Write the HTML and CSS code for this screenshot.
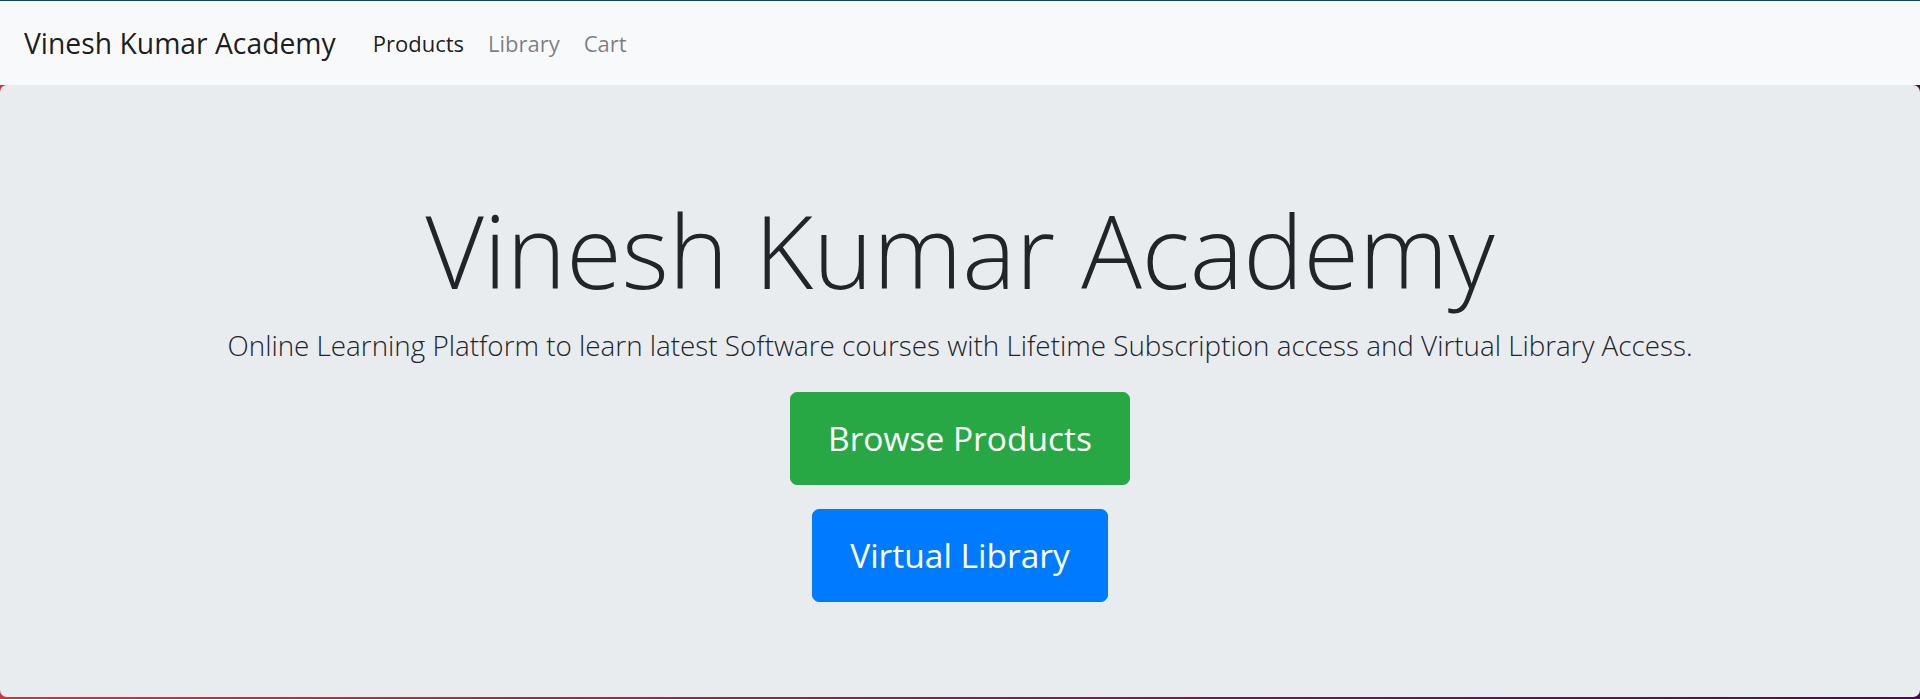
FILE: index.html
```html
<!DOCTYPE html>
<html lang="en">
<head>
<meta charset="utf-8">
<title>Vinesh Kumar Academy</title>
<link rel="stylesheet" href="styles.css">
</head>
<body>
<nav class="navbar">
  <a class="brand" href="#">Vinesh Kumar Academy</a>
  <ul class="nav-links">
    <li><a class="nav-link active" href="#">Products</a></li>
    <li><a class="nav-link" href="#">Library</a></li>
    <li><a class="nav-link" href="#">Cart</a></li>
  </ul>
</nav>
<main class="jumbotron">
  <h1 class="display">Vinesh Kumar Academy</h1>
  <p class="lead">Online Learning Platform to learn latest Software courses with Lifetime Subscription access and Virtual Library Access.</p>
  <div class="actions">
    <a class="btn btn-success" href="#">Browse Products</a>
    <a class="btn btn-primary" href="#">Virtual Library</a>
  </div>
</main>
</body>
</html>
```

FILE: styles.css
```css
html, body {
  margin: 0;
  padding: 0;
  height: 100%;
}
body {
  font-family: "Open Sans", "Noto Sans", sans-serif;
  color: #212529;
  background: linear-gradient(to right, #c23b3f 0%, #8a1d4a 50%, #4a0b4c 100%);
  display: flex;
  flex-direction: column;
  overflow: hidden;
}
.navbar {
  box-sizing: border-box;
  height: 85px;
  flex: none;
  border-top: 1px solid #0b4a4a;
  background: #f8f9fa;
  display: flex;
  align-items: center;
  padding: 0 24px;
}
.brand {
  font-size: 28.3px;
  color: rgba(0, 0, 0, 0.9);
  text-decoration: none;
  margin-right: 25px;
  line-height: 1.5;
}
.nav-links {
  list-style: none;
  display: flex;
  margin: 0;
  padding: 0;
}
.nav-link {
  display: block;
  font-size: 22px;
  padding: 0 12px;
  color: rgba(0, 0, 0, 0.5);
  text-decoration: none;
  line-height: 1.5;
}
.nav-link.active {
  color: rgba(0, 0, 0, 0.9);
}
.jumbotron {
  box-sizing: border-box;
  height: 612px;
  flex: none;
  background: #e9ecef;
  border-radius: 7px;
  display: flex;
  flex-direction: column;
  align-items: center;
  padding-top: 105px;
}
.display {
  font-size: 101px;
  font-weight: 300;
  line-height: 1.2;
  margin: 0;
}
.lead {
  font-size: 27.8px;
  font-weight: 300;
  line-height: 1.5;
  margin: 14px 0 25px;
}
.actions {
  display: flex;
  flex-direction: column;
  align-items: center;
  gap: 24px;
}
.btn {
  display: inline-block;
  font-size: 33.5px;
  line-height: 55px;
  padding: 18px 37px;
  border: 1px solid transparent;
  border-radius: 7px;
  color: #fff;
  text-decoration: none;
}
.btn-success {
  background: #28a745;
  border-color: #28a745;
}
.btn-primary {
  background: #007bff;
  border-color: #007bff;
}
```
